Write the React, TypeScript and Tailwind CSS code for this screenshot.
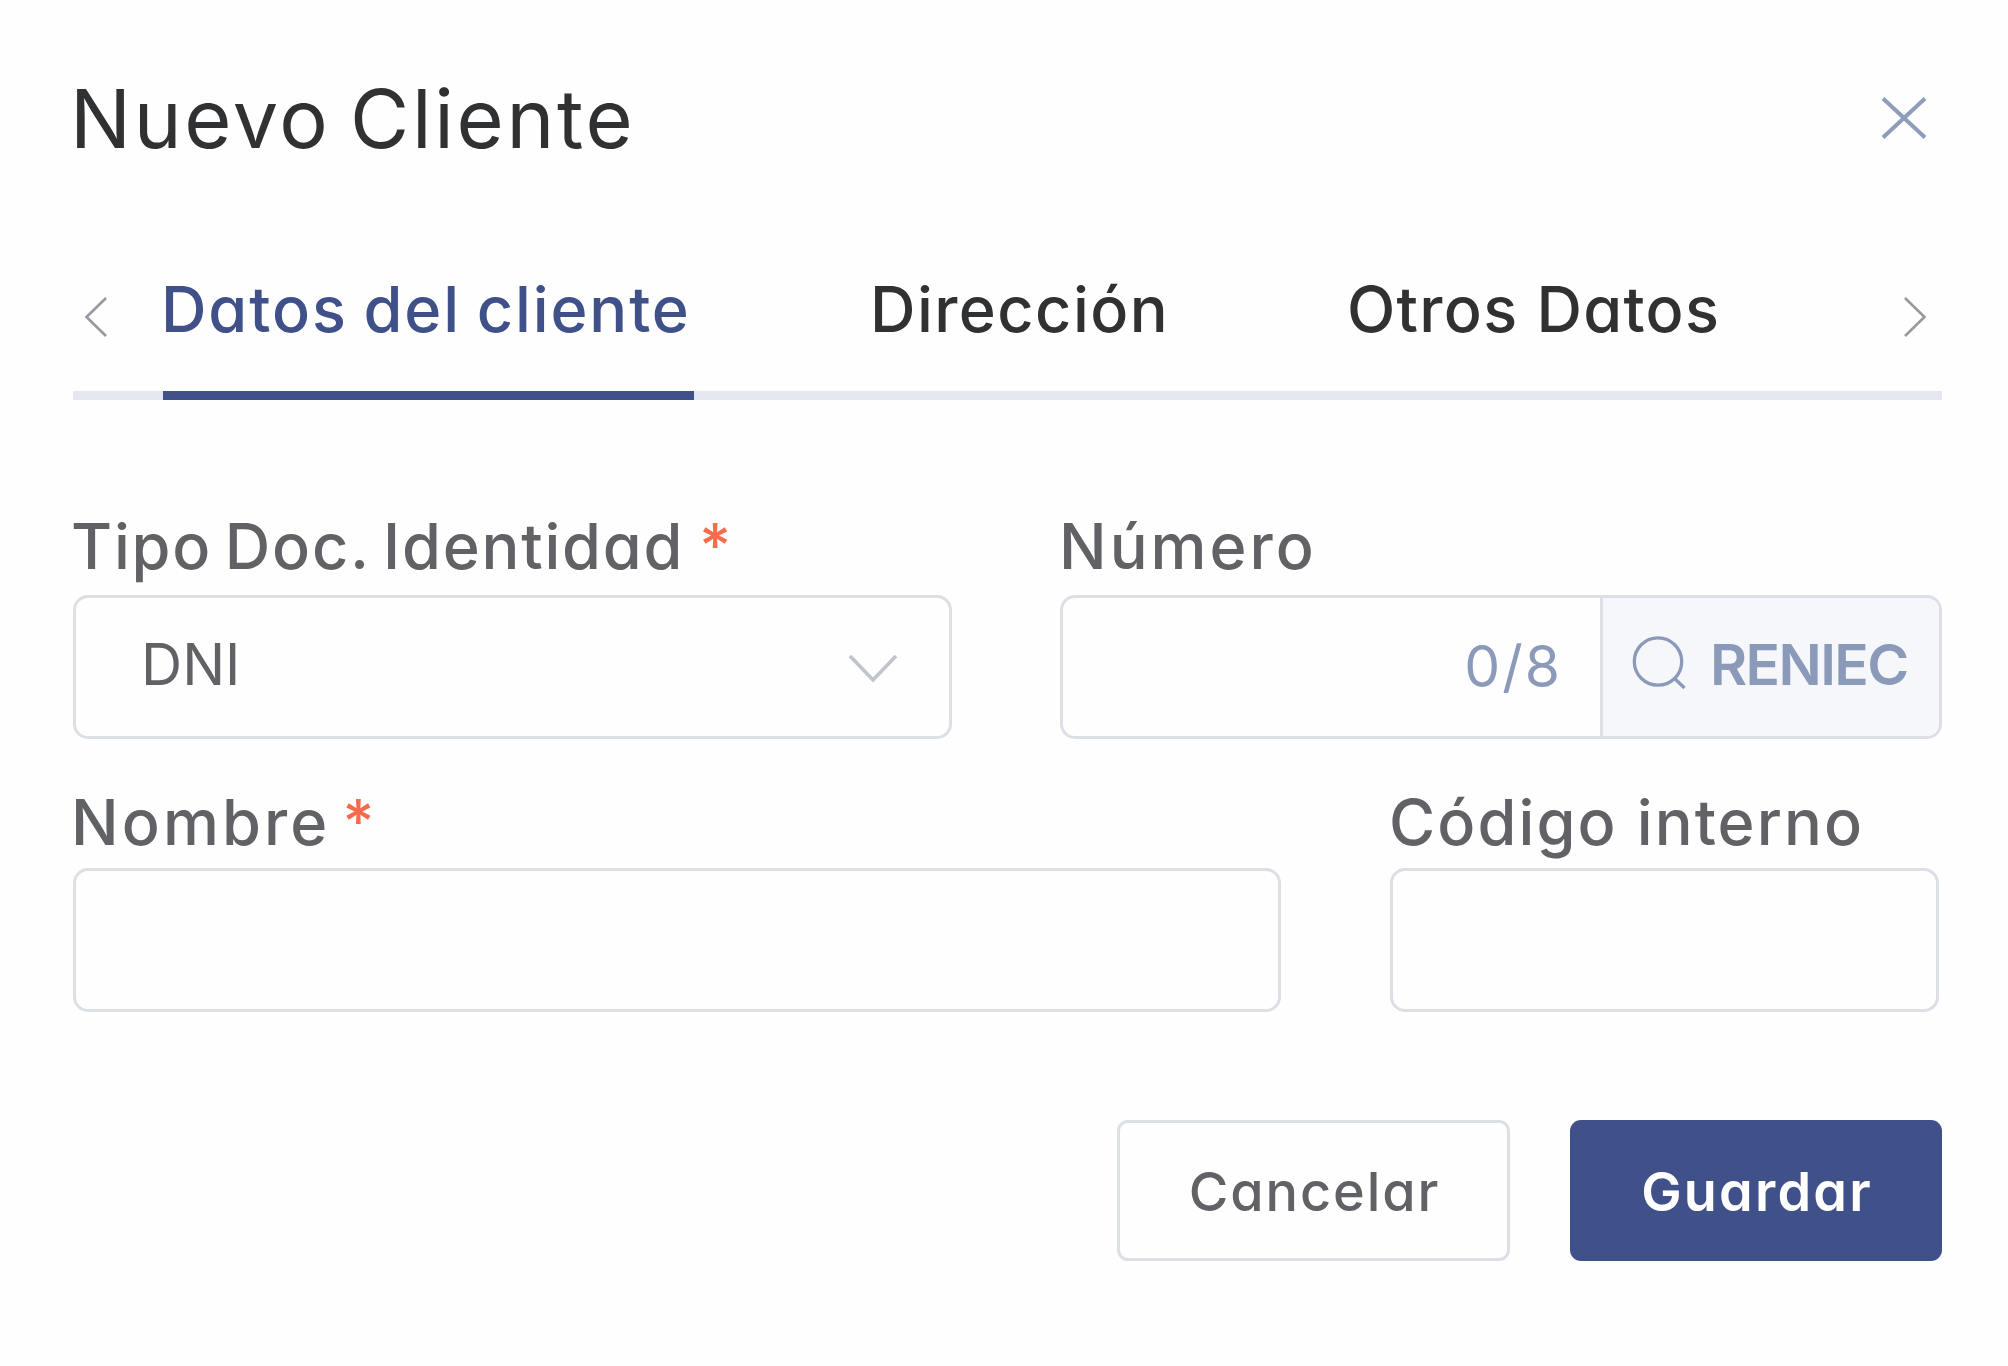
import type { ReactNode } from "react";

function Arrow({ flip = false }: { flip?: boolean }) {
  return (
    <svg
      viewBox="0 0 24 42"
      className={flip ? "mt-[5px] h-[42px] w-6 -scale-x-100" : "mt-[5px] h-[42px] w-6"}
      fill="none"
      stroke="#96999f"
      strokeWidth="2.6"
    >
      <path d="M22 2 L2.5 21 L22 40" />
    </svg>
  );
}

function Label({ children, required = false, starClass = "" }: { children: ReactNode; required?: boolean; starClass?: string }) {
  return (
    <span className="flex items-center whitespace-nowrap text-[63px] leading-none font-medium text-[#606266]">
      {children}
      {required && <span className={`relative -top-px text-[61px] tracking-normal text-[#f56c4c] ${starClass}`}>*</span>}
    </span>
  );
}

export default function App() {
  return (
    <div className="flex h-[1366px] w-full flex-col bg-[#fefefe] pr-[66px] pl-[73px] font-['Inter',sans-serif] [font-feature-settings:'cv11']">
      <header className="mt-[60px] flex h-[119px] items-center justify-between">
        <h1 className="-ml-[3px] text-[81px] leading-none tracking-[2.7px] text-[#303133] [word-spacing:-6px]">Nuevo Cliente</h1>
        <button aria-label="Cerrar" className="mr-[14px]">
          <svg viewBox="0 0 48 46" className="mb-[3px] h-[46px] w-12" fill="none" stroke="#8f9dbc" strokeWidth="4">
            <path d="M3 3.5 L45 42.5 M45 3.5 L3 42.5" />
          </svg>
        </button>
      </header>

      <nav className="mt-[47px] flex h-[174px] border-b-[9px] border-[#e4e7ed] text-[63px] leading-none font-medium text-[#303133]">
        <button className="flex w-[90px] items-center pt-[11px] pl-[11px]">
          <Arrow />
        </button>
        <button className="-mb-[9px] flex w-[531px] items-center border-b-[9px] border-[#405189] pt-px whitespace-nowrap text-[#405189]">
          <span className="-ml-[2px] tracking-[1.9px] [word-spacing:-3px]">Datos del cliente</span>
        </button>
        <button className="ml-[176px] flex w-[303px] items-center pt-px tracking-[1.45px]">Dirección</button>
        <button className="ml-[174px] flex items-center pt-px whitespace-nowrap tracking-[1.3px]">Otros Datos</button>
        <button className="mr-[15px] ml-auto flex items-center pt-[11px]">
          <Arrow flip />
        </button>
      </nav>

      <div className="mt-24 flex gap-[108px]">
        <div className="w-[879px]">
          <div className="-ml-[2px] flex h-[99px] items-center pt-px tracking-[1.8px] [word-spacing:-6px]">
            <Label required starClass="ml-[15px]">Tipo Doc. Identidad</Label>
          </div>
          <div className="flex h-36 items-center justify-between rounded-[15px] border-[3px] border-[#dcdfe6] pr-[50px] pb-[5px] pl-[65px]">
            <span className="text-[57px] leading-none text-[#606266]">DNI</span>
            <svg viewBox="0 0 52 30" className="mt-[6px] h-[30px] w-[52px]" fill="none" stroke="#c0c4cc" strokeWidth="3.6">
              <path d="M3 3 L26 27 L49 3" />
            </svg>
          </div>
        </div>

        <div className="w-[882px]">
          <div className="-ml-px flex h-[99px] items-center pt-px tracking-[3px]">
            <Label>Número</Label>
          </div>
          <div className="flex h-36 overflow-hidden rounded-[15px] border-[3px] border-[#dcdfe6] text-[57px] leading-none text-[#8c9aba]">
            <div className="flex w-[537px] items-center justify-end pr-[38px] pb-[2px] tracking-[2px]">0/8</div>
            <button className="flex flex-1 items-center border-l-[3px] border-[#dcdfe6] bg-[#f5f7fa] pb-[5px] pl-7">
              <svg viewBox="0 0 58 58" className="h-[58px] w-[58px]" fill="none" stroke="currentColor" strokeWidth="3.3">
                <circle cx="27" cy="25.5" r="23.7" />
                <path d="M43 42 L53.5 52" />
              </svg>
              <span className="ml-[21px] font-semibold tracking-[-1.6px]">RENIEC</span>
            </button>
          </div>
        </div>
      </div>

      <div className="mt-9 flex gap-[109px]">
        <div className="w-[1208px]">
          <div className="-ml-[2px] flex h-[93px] items-center pt-px tracking-[3.1px]">
            <Label required starClass="ml-[12px]">Nombre</Label>
          </div>
          <input className="block h-36 w-full rounded-[15px] border-[3px] border-[#dcdfe6]" />
        </div>
        <div className="w-[549px]">
          <div className="-ml-px flex h-[93px] items-center pt-px tracking-[2.1px]">
            <Label>Código interno</Label>
          </div>
          <input className="block h-36 w-full rounded-[15px] border-[3px] border-[#dcdfe6]" />
        </div>
      </div>

      <footer className="mt-[108px] flex h-[141px] justify-end gap-[60px] text-[54px] leading-none">
        <button className="w-[393px] rounded-[11px] border-[3px] border-[#dcdfe6] pt-[2px] pl-[2px] font-medium tracking-[1.9px] text-[#606266]">
          Cancelar
        </button>
        <button className="w-[372px] rounded-[11px] bg-[#405189] pt-[2px] pl-[2px] font-semibold tracking-[2.2px] text-white">Guardar</button>
      </footer>
    </div>
  );
}
